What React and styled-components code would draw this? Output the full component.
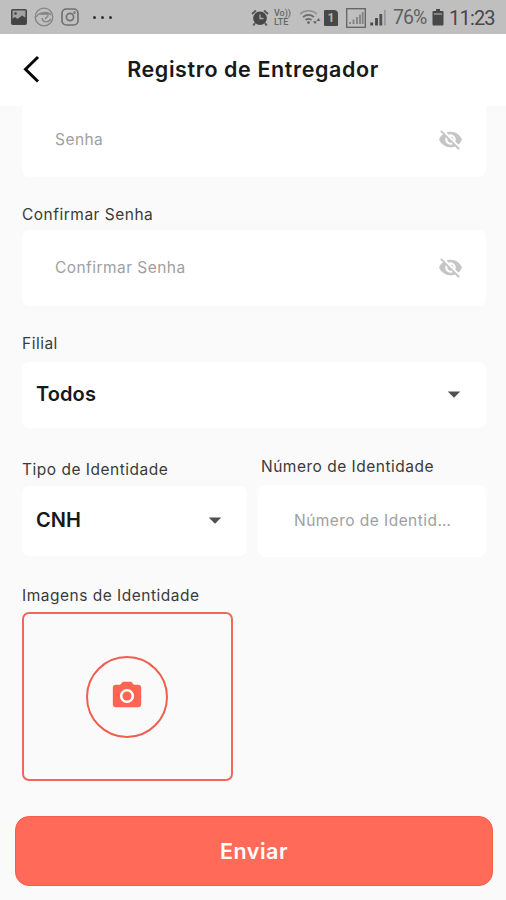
import React from 'react'
import styled, { createGlobalStyle } from 'styled-components';
import { MdArrowDropDown, MdPhotoCamera, MdVisibilityOff } from 'react-icons/md';

function StatusBar(){
  return (
    <Status>
      <StatusLeft>
        <svg width="16" height="16" viewBox="0 0 16 16">
          <rect x="0.8" y="0.8" width="14.4" height="14.4" rx="1" fill="#a2a2a2" stroke="#484848" strokeWidth="1.6"/>
          <path d="M1 10 L4 8 L6.5 10 L11 6.5 L15 9 V15 H1Z" fill="#444"/>
          <circle cx="4.5" cy="4.5" r="1.3" fill="#444"/>
        </svg>
        <svg width="20" height="20" viewBox="0 0 20 20" fill="none" stroke="#858585" strokeWidth="1.3">
          <circle cx="10" cy="10" r="8.8"/>
          <path d="M2 10 C5 5 14 4 17 8 M5 7 H14 C15 10 12 10 11 12 M8 11 C9 16 14 16 17 12"/>
        </svg>
        <svg width="18" height="18" viewBox="0 0 18 18" fill="none" stroke="#727272" strokeWidth="1.7">
          <rect x="1" y="1" width="16" height="16" rx="4.2"/>
          <circle cx="9" cy="9" r="3.6"/>
          <circle cx="13.5" cy="4.6" r="0.5"/>
        </svg>
        <Dots><i/><i/><i/></Dots>
      </StatusLeft>
      <StatusRight>
        <svg width="18" height="18" viewBox="0 0 18 18">
          <circle cx="9" cy="9.3" r="6.8" fill="#484848"/>
          <path d="M1 5 L5 1.5 M17 5 L13 1.5 M4 14 L2.3 16.5 M14 14 L15.7 16.5" stroke="#585858" strokeWidth="2"/>
          <path d="M9 5.5 V9.5 H12.5" fill="none" stroke="#aaa" strokeWidth="1.3"/>
        </svg>
        <Volte><span>Vo))</span><span>LTE</span></Volte>
        <Wifi width="22" height="18" viewBox="0 0 22 18" fill="none" stroke="#6b6b6b">
          <path d="M1 5 C6 0.8 13 0.8 18 5" stroke="#919191" strokeWidth="1.5"/>
          <path d="M4 8 C7.5 5.3 11.5 5.3 15 8" strokeWidth="1.7"/>
          <path d="M6.5 11 C8.5 9.6 10.5 9.6 12.5 11" strokeWidth="1.7"/>
          <circle cx="9.5" cy="13.6" r="1" fill="#666"/>
          <path d="M14 12.2 H18 L16 15.2Z M17.5 12 L19.5 9 L21.5 12Z" fill="#666" stroke="none"/>
        </Wifi>
        <Sim>1</Sim>
        <SignalBox width="20" height="20" viewBox="0 0 20 20">
          <rect x="0.7" y="0.7" width="18.6" height="18.6" fill="none" stroke="#626262" strokeWidth="1.3"/>
          <path d="M4 14 V16 M7.5 11.5 V16 M11 9 V16 M14 6.5 V16 M16.7 4 V16" stroke="#828282" strokeWidth="1.8"/>
        </SignalBox>
        <svg width="17" height="17" viewBox="0 0 17 17">
          <path d="M1.7 13.5 V16.5 M6.5 9 V16.5" stroke="#484848" strokeWidth="2.8"/>
          <path d="M10.8 5 V16.5" stroke="#505050" strokeWidth="2.8"/>
          <path d="M14.8 1 V16.5" stroke="#999" strokeWidth="1.8"/>
        </svg>
        <Percent>76%</Percent>
        <svg width="12" height="17" viewBox="0 0 12 17">
          <path d="M4 0 H8 V2 H10.5 Q11.5 2 11.5 3 V15.5 Q11.5 16.5 10.5 16.5 H1.5 Q0.5 16.5 0.5 15.5 V3 Q0.5 2 1.5 2 H4Z" fill="#484848"/>
          <path d="M2 4 H10 V6 H2Z" fill="#858585"/>
        </svg>
        <Clock>11:23</Clock>
      </StatusRight>
    </Status>
  );
}

function PasswordField({ placeholder, $height, $flat }){
  return (
    <Field $height={$height} $flat={$flat}>
      <Input type="password" placeholder={placeholder}/>
      <EyeIcon/>
    </Field>
  );
}

function App(){
  return (
    <Screen>
      <GlobalStyle/>
      <StatusBar/>
      <Header>
        <Back aria-label="Voltar">
          <svg width="18" height="28" viewBox="0 0 18 28">
            <path d="M15 2 L2.5 14.2 L15 26.5" fill="none" stroke="#080808" strokeWidth="3"/>
          </svg>
        </Back>
        <Title>Registro de Entregador</Title>
      </Header>
      <Form>
        <PasswordField placeholder="Senha" $height={71} $flat/>
        <Label $top={27} $bottom={4}>Confirmar Senha</Label>
        <PasswordField placeholder="Confirmar Senha" $height={76}/>
        <Label $top={27} $bottom={7}>Filial</Label>
        <Select $height={66}>
          <span>Todos</span>
          <Arrow/>
        </Select>
        <Columns>
          <Column $width={225}>
            <Label $top={31} $bottom={5}>Tipo de Identidade</Label>
            <Select $height={70}>
              <span>CNH</span>
              <Arrow/>
            </Select>
          </Column>
          <Column $width={228}>
            <Label $top={28} $bottom={7} $left={3}>Número de Identidade</Label>
            <Field $height={72} $left={36} $right={34}>
              <Input placeholder="Número de Identidade"/>
            </Field>
          </Column>
        </Columns>
        <Label $top={28} $bottom={5}>Imagens de Identidade</Label>
        <Upload aria-label="Imagens de Identidade">
          <Round><MdPhotoCamera/></Round>
        </Upload>
      </Form>
      <Submit>Enviar</Submit>
    </Screen>
  );
}

const GlobalStyle = createGlobalStyle`
  * { box-sizing: border-box; }
  body {
    margin: 0;
    background: #fafafa;
    font-family: Inter, Roboto, sans-serif;
  }
  button, input { font-family: inherit; }
  svg { display: block; flex-shrink: 0; }
`;

const Screen = styled.div`
  width: 506px;
  height: 900px;
  display: flex;
  flex-direction: column;
  background: #fafafa;
  overflow: hidden;
`;

const Status = styled.div`
  height: 34px;
  flex-shrink: 0;
  padding: 0 11px;
  display: flex;
  align-items: center;
  justify-content: space-between;
  background: #bfbfbf;
  color: #484848;
  font-family: Roboto, sans-serif;
`;

const StatusLeft = styled.div`
  display: flex;
  align-items: center;
  gap: 7px;
`;

const Dots = styled.div`
  display: flex;
  gap: 5px;
  margin-left: 7px;
  i {
    width: 3px;
    height: 3px;
    border-radius: 50%;
    background: #333;
  }
`;

const StatusRight = styled.div`
  display: flex;
  align-items: center;
  padding-top: 1px;
`;

const Volte = styled.div`
  width: 18px;
  margin: 0 7px 0 5px;
  display: flex;
  flex-direction: column;
  font-size: 9px;
  font-weight: 500;
  line-height: 9px;
  color: #666;
`;

const Wifi = styled.svg`
  margin-right: 3px;
`;

const Sim = styled.div`
  width: 14px;
  height: 16px;
  margin-right: 8px;
  border-radius: 1px 4px 1px 1px;
  background: #484848;
  color: #b5b5b5;
  font-size: 12px;
  font-weight: 700;
  line-height: 16px;
  text-align: center;
`;

const SignalBox = styled.svg`
  margin-right: 4px;
`;

const Percent = styled.span`
  width: 33px;
  margin: 0 6px;
  font-size: 19.5px;
  letter-spacing: -1px;
  color: #606060;
`;

const Clock = styled.span`
  width: 46px;
  margin-left: 5px;
  font-size: 20px;
  letter-spacing: -0.8px;
  white-space: nowrap;
`;

const Header = styled.header`
  height: 72px;
  flex-shrink: 0;
  padding-bottom: 2px;
  display: grid;
  grid-template-columns: 60px 1fr 60px;
  align-items: center;
  background: #fff;
`;

const Back = styled.button`
  border: none;
  background: none;
  padding: 0 0 0 23px;
  cursor: pointer;
`;

const Title = styled.h1`
  margin: 0;
  color: #181818;
  font-size: 21.5px;
  font-weight: 600;
  letter-spacing: 0.6px;
  text-align: center;
  white-space: nowrap;
`;

const Form = styled.form`
  flex: 1;
  padding: 0 20px 0 22px;
`;

const Field = styled.div`
  height: ${props => props.$height}px;
  padding: 0 ${props => props.$right || 23}px ${props => props.$flat ? 4 : 1}px ${props => props.$left || 33}px;
  display: flex;
  align-items: center;
  background: #fff;
  border-radius: ${props => props.$flat ? '0 0 7px 7px' : '7px'};
  svg { color: #c5c5c5; }
`;

const Input = styled.input`
  flex: 1;
  min-width: 0;
  padding: 0;
  border: none;
  outline: none;
  background: none;
  font-size: 15.5px;
  letter-spacing: 0.45px;
  text-overflow: ellipsis;
  &::placeholder {
    color: #a0a0a0;
    opacity: 1;
  }
`;

const EyeIcon = styled(MdVisibilityOff)`
  width: 25px;
  height: 25px;
`;

const Label = styled.label`
  display: block;
  margin: ${props => props.$top}px 0 ${props => props.$bottom}px ${props => props.$left || 0}px;
  color: #3a3a3a;
  font-size: 15.5px;
  line-height: 22px;
  letter-spacing: 0.5px;
  white-space: nowrap;
`;

const Select = styled.div`
  height: ${props => props.$height}px;
  padding: 0 17px 2px 14px;
  display: flex;
  align-items: center;
  justify-content: space-between;
  background: #fff;
  border-radius: 7px;
  color: #181818;
  font-size: 20px;
  font-weight: 600;
  letter-spacing: 0.1px;
`;

const Arrow = styled(MdArrowDropDown)`
  width: 30px;
  height: 30px;
  color: #505050;
`;

const Columns = styled.div`
  display: flex;
  justify-content: space-between;
`;

const Column = styled.div`
  width: ${props => props.$width}px;
`;

const Upload = styled.button`
  width: 211px;
  height: 169px;
  padding: 0 1px 0 0;
  display: flex;
  align-items: center;
  justify-content: center;
  border: 2px solid #f26757;
  border-radius: 7px;
  background: none;
  cursor: pointer;
`;

const Round = styled.span`
  width: 82px;
  height: 82px;
  padding-bottom: 2px;
  display: flex;
  align-items: center;
  justify-content: center;
  border: 2px solid #ee604d;
  border-radius: 50%;
  color: #ff6452;
  font-size: 34px;
`;

const Submit = styled.button`
  height: 70px;
  flex-shrink: 0;
  margin: 0 13px 14px 15px;
  border: 1px solid #f65c49;
  border-radius: 14px;
  background: #ff6b58;
  color: #fff;
  font-size: 21.5px;
  font-weight: 600;
  letter-spacing: 0.5px;
  cursor: pointer;
`;

export default App;
